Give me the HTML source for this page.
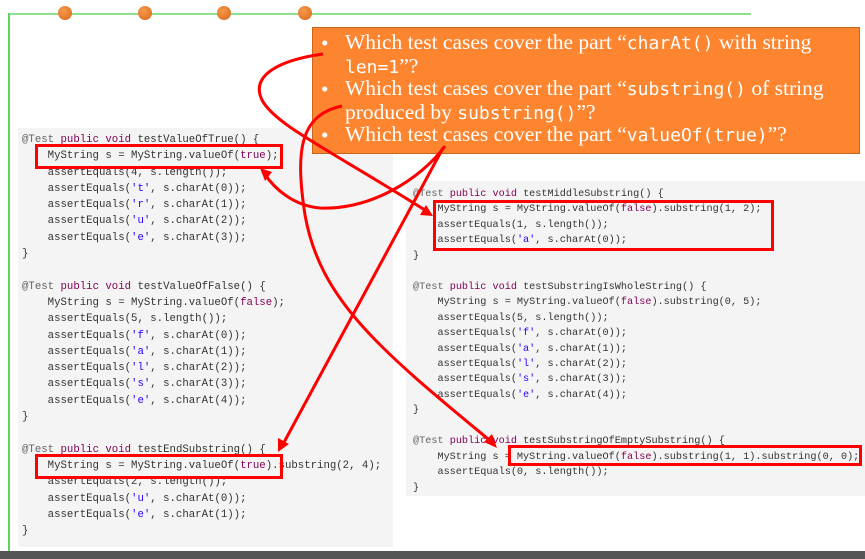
<!DOCTYPE html>
<html><head><meta charset="utf-8"><style>
body{margin:0;width:865px;height:559px;background:#fff;position:relative;overflow:hidden;font-family:"Liberation Sans",sans-serif}
.pan{position:absolute;background:#f4f4f4}
pre{margin:0;position:absolute;font-family:"Liberation Mono",monospace;color:#333;white-space:pre}
.k{color:#7f0055}.s{color:#2a00ff}.a{color:#646464}
.box{position:absolute;border:3px solid #f00;box-sizing:border-box}
.dot{position:absolute;width:14px;height:14px;border-radius:50%;background:radial-gradient(circle at 40% 35%,#f59a4a,#d9661a);top:6px}
#ob{position:absolute;left:312px;top:27px;width:548px;height:127px;background:#fd8530;border:1px solid #c8661e;box-sizing:border-box;color:#fff;font-family:"Liberation Serif",serif;font-size:21.5px}
#ob div{position:absolute;left:32px;white-space:nowrap}
#ob b{position:absolute;left:8px;font-weight:normal}
#ob code{font-family:"DejaVu Sans Mono",monospace;font-size:18px}
</style></head><body>
<div style="position:absolute;left:9px;top:13px;width:742px;height:2px;background:#8fe08f"></div>
<div style="position:absolute;left:8px;top:13px;width:2px;height:540px;background:#5fd35f"></div>
<div class="dot" style="left:58px"></div><div class="dot" style="left:138px"></div><div class="dot" style="left:217px"></div><div class="dot" style="left:298px"></div>

<div class="pan" style="left:18px;top:128px;width:375px;height:419px"></div>
<div class="pan" style="left:406px;top:181px;width:459px;height:315px"></div>

<pre style="left:22px;top:132px;font-size:10.7px;line-height:16.3px"><span class="a">@Test</span> <span class="k">public void</span> testValueOfTrue() {
    MyString s = MyString.valueOf(<span class="k">true</span>);
    assertEquals(4, s.length());
    assertEquals(<span class="s">'t'</span>, s.charAt(0));
    assertEquals(<span class="s">'r'</span>, s.charAt(1));
    assertEquals(<span class="s">'u'</span>, s.charAt(2));
    assertEquals(<span class="s">'e'</span>, s.charAt(3));
}

<span class="a">@Test</span> <span class="k">public void</span> testValueOfFalse() {
    MyString s = MyString.valueOf(<span class="k">false</span>);
    assertEquals(5, s.length());
    assertEquals(<span class="s">'f'</span>, s.charAt(0));
    assertEquals(<span class="s">'a'</span>, s.charAt(1));
    assertEquals(<span class="s">'l'</span>, s.charAt(2));
    assertEquals(<span class="s">'s'</span>, s.charAt(3));
    assertEquals(<span class="s">'e'</span>, s.charAt(4));
}

<span class="a">@Test</span> <span class="k">public void</span> testEndSubstring() {
    MyString s = MyString.valueOf(<span class="k">true</span>).substring(2, 4);
    assertEquals(2, s.length());
    assertEquals(<span class="s">'u'</span>, s.charAt(0));
    assertEquals(<span class="s">'e'</span>, s.charAt(1));
}</pre>

<pre style="left:413px;top:187px;font-size:10.2px;line-height:15.45px"><span class="a">@Test</span> <span class="k">public void</span> testMiddleSubstring() {
    MyString s = MyString.valueOf(<span class="k">false</span>).substring(1, 2);
    assertEquals(1, s.length());
    assertEquals(<span class="s">'a'</span>, s.charAt(0));
}

<span class="a">@Test</span> <span class="k">public void</span> testSubstringIsWholeString() {
    MyString s = MyString.valueOf(<span class="k">false</span>).substring(0, 5);
    assertEquals(5, s.length());
    assertEquals(<span class="s">'f'</span>, s.charAt(0));
    assertEquals(<span class="s">'a'</span>, s.charAt(1));
    assertEquals(<span class="s">'l'</span>, s.charAt(2));
    assertEquals(<span class="s">'s'</span>, s.charAt(3));
    assertEquals(<span class="s">'e'</span>, s.charAt(4));
}

<span class="a">@Test</span> <span class="k">public void</span> testSubstringOfEmptySubstring() {
    MyString s = MyString.valueOf(<span class="k">false</span>).substring(1, 1).substring(0, 0);
    assertEquals(0, s.length());
}</pre>

<div class="box" style="left:35px;top:144px;width:248px;height:25px"></div>
<div class="box" style="left:35px;top:454px;width:248px;height:25px"></div>
<div class="box" style="left:433px;top:200px;width:341px;height:51px"></div>
<div class="box" style="left:508px;top:445px;width:354px;height:21px"></div>

<div id="ob">
<b style="top:3px">•</b><div style="top:2px">Which test cases cover the part “<code>charAt()</code> with string</div>
<div style="top:26px"><code>len=1</code>”?</div>
<b style="top:49px">•</b><div style="top:48px">Which test cases cover the part “<code>substring()</code> of string</div>
<div style="top:72px">produced by <code>substring()</code>”?</div>
<b style="top:95px">•</b><div style="top:94px">Which test cases cover the part “<code>valueOf(true)</code>”?</div>
</div>

<svg width="865" height="559" style="position:absolute;left:0;top:0" fill="none" stroke="#f00" stroke-width="3">
<path d="M323,54 C280,60 250,75 262,100 C275,125 330,150 428,212"/>
<path d="M342,106 C300,115 295,150 305,215 C320,300 380,350 493,443"/>
<path d="M445,146 C420,180 370,210 320,208 C295,206 275,190 264,173"/>
<path d="M443,148 L282,446"/>
<g fill="#f00" stroke="none">
<polygon points="433,216 420,215 426,205"/>
<polygon points="497,448 484,442 492,434"/>
<polygon points="260,168 272,172 265,181"/>
<polygon points="278,452 278,438 289,444"/>
</g>
</svg>
<div style="position:absolute;left:0;top:551px;width:865px;height:8px;background:#555"></div>
</body></html>
